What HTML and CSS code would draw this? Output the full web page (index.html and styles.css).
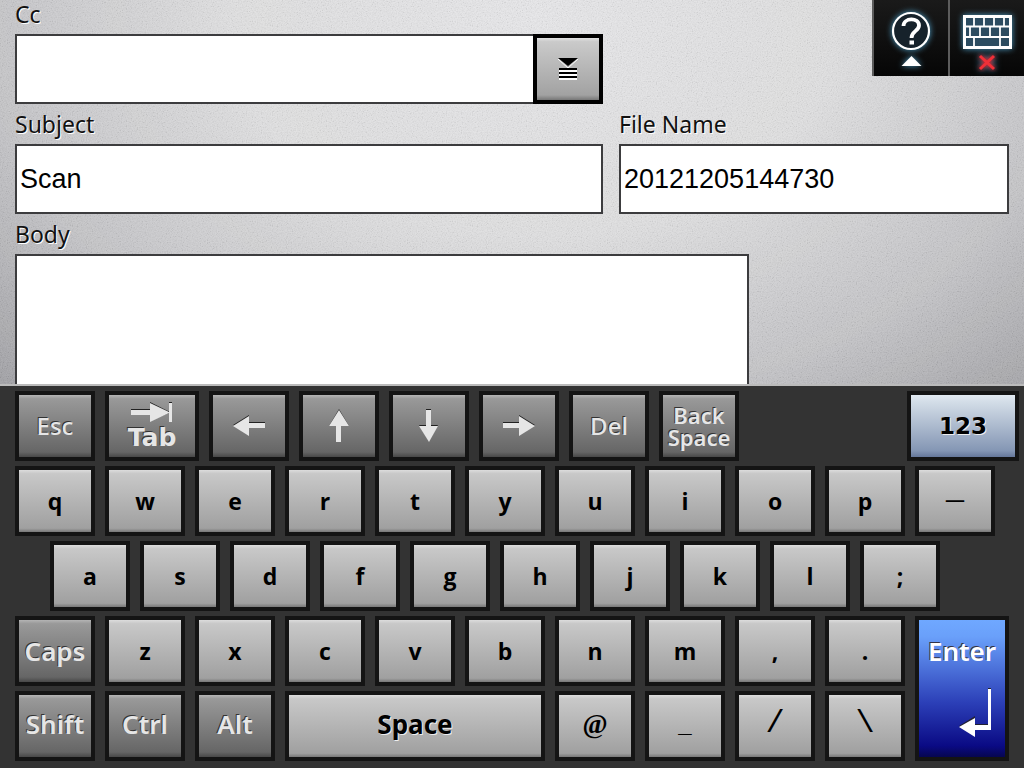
FILE: index.html
```html
<!DOCTYPE html>
<html lang="en">
  <head>
    <meta charset="UTF-8" />
    <meta name="viewport" content="width=device-width, initial-scale=1.0" />
    <title>Scan to E-mail</title>
    <link rel="stylesheet" href="styles.css">
  </head>
  <body>
    <main class="panel">
      <form class="form">
        <div class="row">
          <div class="field wide">
            <label for="cc">Cc</label>
            <div class="combo">
              <input id="cc" type="text" />
              <button type="button" class="list-btn" aria-label="Address list">
                <svg width="20" height="24" viewBox="0 0 20 24">
                  <path d="M0 2L10 11L20 2" fill="none" stroke="#fff" stroke-width="1" />
                  <path d="M0 1H20L10 9Z" fill="#000" />
                  <path d="M1 11H19V23H1Z" fill="#fff" />
                  <path d="M1 11H19V13H1ZM1 15H19V17H1ZM1 19H19V21H1Z" fill="#000" />
                </svg>
              </button>
            </div>
          </div>
          <div class="field narrow"></div>
        </div>
        <div class="row">
          <div class="field wide">
            <label for="subject">Subject</label>
            <input id="subject" type="text" value="Scan" />
          </div>
          <div class="field narrow">
            <label for="filename">File Name</label>
            <input id="filename" type="text" value="20121205144730" />
          </div>
        </div>
        <div class="row">
          <div class="field body-field">
            <label for="message">Body</label>
            <textarea id="message"></textarea>
          </div>
          <div class="field rest"></div>
        </div>
      </form>

      <div class="tools">
        <button type="button" class="tool" aria-label="Help">
          <svg width="60" height="72" viewBox="0 0 60 72">
            <circle cx="30" cy="31" r="18" fill="#16222b" stroke="#fff" stroke-width="2.2" />
            <path d="M22.500 26C22.500 17.500 38 17 38 25.500C38 31 30.500 31 30.500 38" fill="none" stroke="#fff" stroke-width="3.800" />
            <path d="M28.500 40.500H33V44.500H28.500Z" fill="#fff" />
            <path d="M20.500 66L30.500 56L40.500 66Z" fill="#fff" />
          </svg>
        </button>
        <button type="button" class="tool" aria-label="Close keyboard">
          <svg width="60" height="72" viewBox="0 0 60 72">
            <path d="M7.500 16.500H53.500V47.500H7.500Z" fill="#2c4c60" stroke="#fff" stroke-width="3" />
            <path d="M7 26.500H53M7 37H53M17 16V26.500M27 16V26.500M37 16V26.500M47 16V26.500M13 26.500V37M23 26.500V37M33 26.500V37M43 26.500V37M17 37V47M43 37V47" fill="none" stroke="#fff" stroke-width="1.800" />
            <path class="cross" d="M23 56L37 69M37 56L23 69" fill="none" stroke="#f03038" stroke-width="3" />
          </svg>
        </button>
      </div>
    </main>

    <section class="keyboard">
      <div class="keys first">
        <button class="key dark thin">Esc</button>
        <button class="key dark tab">
          <svg width="42" height="20" viewBox="0 0 42 20">
            <path d="M0 7H19V0L37 9H38V0H41V19H38V11L19 19V12H0Z" fill="#222" />
            <path d="M0 8H19V1L38 10V1H41V20H38V11L19 20V13H0Z" fill="#e6e6e6" />
          </svg>
          <span>Tab</span>
        </button>
        <button class="key dark" aria-label="Left">
          <svg width="32" height="32" viewBox="0 0 32 32">
            <path d="M0 15L16 5V12H32V17H16V24Z" fill="#222" />
            <path d="M0 16L16 6V13H32V18H16V26Z" fill="#e6e6e6" />
          </svg>
        </button>
        <button class="key dark" aria-label="Up">
          <svg width="32" height="34" viewBox="0 0 32 34">
            <path d="M16 0L26 17H6Z" fill="#222" />
            <path d="M16 1L26 17H18V33H13V17H6Z" fill="#e6e6e6" />
          </svg>
        </button>
        <button class="key dark" aria-label="Down">
          <svg width="32" height="34" viewBox="0 0 32 34">
            <path d="M13 0H18V16H25L16 32L6 16H13Z" fill="#222" />
            <path d="M13 1H18V17H25L16 33L6 17H13Z" fill="#e6e6e6" />
          </svg>
        </button>
        <button class="key dark" aria-label="Right">
          <svg width="32" height="32" viewBox="0 0 32 32">
            <path d="M32 15L16 5V12H0V17H16V24Z" fill="#222" />
            <path d="M32 16L16 6V13H0V18H16V26Z" fill="#e6e6e6" />
          </svg>
        </button>
        <button class="key dark thin">Del</button>
        <button class="key dark back"><span>Back</span><span>Space</span></button>
        <span class="filler"></span>
        <button class="key numbers">123</button>
      </div>

      <div class="keys second">
        <button class="key">q</button>
        <button class="key">w</button>
        <button class="key">e</button>
        <button class="key">r</button>
        <button class="key">t</button>
        <button class="key">y</button>
        <button class="key">u</button>
        <button class="key">i</button>
        <button class="key">o</button>
        <button class="key">p</button>
        <button class="key dash">—</button>
      </div>

      <div class="keys third">
        <button class="key">a</button>
        <button class="key">s</button>
        <button class="key">d</button>
        <button class="key">f</button>
        <button class="key">g</button>
        <button class="key">h</button>
        <button class="key">j</button>
        <button class="key">k</button>
        <button class="key">l</button>
        <button class="key">;</button>
      </div>

      <div class="bottom">
        <div class="bottom-rows">
          <div class="keys">
            <button class="key dark">Caps</button>
            <button class="key">z</button>
            <button class="key">x</button>
            <button class="key">c</button>
            <button class="key">v</button>
            <button class="key">b</button>
            <button class="key">n</button>
            <button class="key">m</button>
            <button class="key">,</button>
            <button class="key">.</button>
          </div>
          <div class="keys last">
            <button class="key dark">Shift</button>
            <button class="key dark">Ctrl</button>
            <button class="key dark">Alt</button>
            <button class="key space">Space</button>
            <button class="key at">@</button>
            <button class="key underscore">_</button>
            <button class="key slash">/</button>
            <button class="key slash">\</button>
          </div>
        </div>
        <button class="key enter">
          <span>Enter</span>
          <svg width="34" height="50" viewBox="0 0 34 50">
            <path d="M29 0H32V40H16V48L0 38L16 28V36H29Z" fill="#223" />
            <path d="M29 1H32V42H16V49L0 39L16 30V37H29Z" fill="#fff" />
          </svg>
        </button>
      </div>
    </section>
  </body>
</html>
```
FILE: styles.css
```css
* {
  box-sizing: border-box;
}
body {
  margin: 0;
  height: 100vh;
  display: flex;
  flex-direction: column;
  overflow: hidden;
  background: #333;
  font-family: "Noto Sans", sans-serif;
}
button {
  margin: 0;
  padding: 0;
  cursor: pointer;
}
svg {
  display: block;
}

/* form */
.panel {
  flex: 1;
  min-height: 0;
  position: relative;
  overflow: hidden;
  /* brushed metal: fine noise over a soft highlight */
  background:
    url("data:image/svg+xml,%3Csvg xmlns='http://www.w3.org/2000/svg' width='200' height='200'%3E%3Cfilter id='n' x='0' y='0' width='100%25' height='100%25'%3E%3CfeTurbulence type='fractalNoise' baseFrequency='0.8' numOctaves='2' stitchTiles='stitch'/%3E%3CfeColorMatrix values='2 0 0 0 -0.5 2 0 0 0 -0.5 2 0 0 0 -0.5 0 0 0 0 1'/%3E%3C/filter%3E%3Crect width='200' height='200' filter='url(%23n)' opacity='0.08'/%3E%3C/svg%3E"),
    radial-gradient(ellipse 66% 125% at 52% 5%, #e6e6e8 0%, #dededf 45%, #c4c4c7 80%, #a0a0a4 110%);
}
.form {
  margin-top: -6px;
  padding: 0 15px;
}
.row {
  display: flex;
  gap: 16px;
}
.field {
  min-width: 0;
}
.wide {
  flex: 588 1 0;
}
.narrow {
  flex: 390 1 0;
}
.body-field {
  flex: 734 1 0;
}
.rest {
  flex: 244 1 0;
}
label {
  display: block;
  height: 40px;
  line-height: 40px;
  font-size: 23px;
  color: #111;
  text-shadow: 1px 1px 0 #fff;
}
input,
textarea {
  display: block;
  width: 100%;
  height: 70px;
  margin: 0;
  padding: 0 3px;
  border: 2px solid #3c3c3e;
  border-radius: 0;
  background: #fff;
  color: #000;
  font-family: "Liberation Sans", Arial, sans-serif;
  font-size: 27px;
  outline: none;
}
textarea {
  height: 200px;
  resize: none;
}
.combo {
  display: flex;
}
.combo input {
  flex: 1;
  min-width: 0;
  border-right: none;
}
.list-btn {
  width: 70px;
  height: 70px;
  display: flex;
  align-items: center;
  justify-content: center;
  border: 4px solid #000;
  background: linear-gradient(#e2e2e2 0%, #cacaca 6%, #a2a2a2 92%, #777 100%);
}

.tools {
  position: absolute;
  top: 0;
  right: 0;
  display: flex;
}
.tool {
  width: 76px;
  height: 76px;
  display: flex;
  justify-content: center;
  border: none;
  border-left: 2px solid #5c5c5c;
  background: linear-gradient(#1a1a1a, #060606);
}
.tool svg {
  filter: drop-shadow(0 0 3px #4d9cc4);
}
.cross {
  filter: drop-shadow(0 0 2px #f00);
}

/* keyboard */
.keyboard {
  display: flex;
  flex-direction: column;
  gap: 5px;
  padding: 5px 0 7px;
  border-top: 2px solid #bbb;
  background: #333;
}
.keys {
  display: flex;
  gap: 10px;
}
.first {
  padding: 0 5px 0 15px;
}
.second {
  padding: 0 29px 0 15px;
}
.third {
  padding: 0 84px 0 50px;
}
.bottom {
  display: flex;
  gap: 10px;
  padding: 0 15px;
}
.bottom-rows {
  flex: 890 1 890px;
  min-width: 0;
  display: flex;
  flex-direction: column;
  gap: 5px;
}
.key {
  flex: 80 1 80px;
  min-width: 0;
  height: 70px;
  display: flex;
  align-items: center;
  justify-content: center;
  border: 4px solid #141414;
  background: linear-gradient(#dcdcdc 0%, #c8c8c8 6%, #a0a0a0 94%, #787878 100%);
  color: #000;
  font-family: "Open Sans", sans-serif;
  font-size: 23px;
  font-weight: 700;
  line-height: 24px;
}
.last .key {
  padding-bottom: 4px;
}
.dark {
  background: linear-gradient(#b4b4b4 0%, #999 6%, #666 92%, #484848 100%);
  color: #e6e6e6;
  font-family: "Noto Sans", sans-serif;
  font-size: 26px;
  font-weight: 600;
  text-shadow: -1px -1px 0 #333;
}
.thin {
  font-size: 24px;
  font-weight: 500;
}
.tab {
  flex: 94 1 94px;
  flex-direction: column;
  gap: 4px;
  font-family: "DejaVu Sans", sans-serif;
  font-size: 25px;
  font-weight: 700;
}
.back {
  flex-direction: column;
  font-size: 22px;
  line-height: 22px;
}
.filler {
  flex: 148 1 148px;
}
.numbers {
  flex: 112 1 112px;
  background: linear-gradient(#e2eaf2 0%, #d4dee8 10%, #8496b4 90%, #65779a 100%);
  font-family: "DejaVu Sans", sans-serif;
  text-shadow: 1px 1px 0 #eee;
}
.space {
  flex: 260 1 260px;
  font-family: "Noto Sans", sans-serif;
  font-size: 26px;
  text-shadow: 1px 1px 0 #eee;
}
.dash {
  padding-bottom: 4px;
  font-size: 20px;
  font-weight: 600;
}
.underscore {
  font-family: "Liberation Sans", Arial, sans-serif;
  font-size: 24px;
}
.slash {
  font-family: "Liberation Mono", monospace;
  font-size: 32px;
  font-weight: 400;
}
.at {
  font-family: "Liberation Serif", serif;
  font-size: 27px;
}
.enter {
  flex: 94 1 94px;
  height: auto;
  flex-direction: column;
  justify-content: space-between;
  padding: 19px 0;
  background: linear-gradient(#6fa8ff 0%, #6aa0fa 12%, #2c40b8 60%, #0a0a84 92%, #060650 100%);
  color: #fff;
  font-family: "Noto Sans", sans-serif;
  font-size: 26px;
  font-weight: 600;
  text-shadow: -1px -1px 0 #334;
}
.enter svg {
  margin-left: 28px;
}
```
